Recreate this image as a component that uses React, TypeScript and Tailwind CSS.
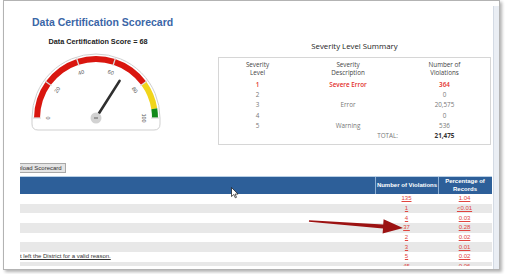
import React from "react";

const summaryRows = [
  { level: "1", desc: "Severe Error", count: "364", red: true },
  { level: "2", desc: "", count: "0" },
  { level: "3", desc: "Error", count: "20,575" },
  { level: "4", desc: "", count: "0" },
  { level: "5", desc: "Warning", count: "536" },
];

const detailRows = [
  { label: "", count: "135", pct: "1.04" },
  { label: "", count: "1", pct: "<0.01" },
  { label: "", count: "4", pct: "0.03" },
  { label: "", count: "37", pct: "0.28" },
  { label: "", count: "2", pct: "0.02" },
  { label: "", count: "3", pct: "0.01" },
  { label: "Student left the District for a valid reason.", count: "5", pct: "0.02" },
  { label: "", count: "45", pct: "0.06" },
];

// gauge centre in svg coords
const CX = 68;
const CY = 68;

const polar = (r: number, v: number) => {
  const a = ((180 - 1.8 * v) * Math.PI) / 180;
  return { x: CX + r * Math.cos(a), y: CY - r * Math.sin(a) };
};

const band = (v1: number, v2: number, ro = 62, ri = 56) => {
  const a = polar(ro, v1);
  const b = polar(ro, v2);
  const c = polar(ri, v2);
  const d = polar(ri, v1);
  return `M${a.x} ${a.y} A${ro} ${ro} 0 0 1 ${b.x} ${b.y} L${c.x} ${c.y} A${ri} ${ri} 0 0 0 ${d.x} ${d.y} Z`;
};

const Gauge = ({ value }: { value: number }) => {
  const tip = polar(44, value);
  const tail = polar(-3, value);
  return (
    <svg width="140" height="84" viewBox="0 0 140 84" className="mt-[4px] block">
      <path
        d="M4 68 A64 64 0 0 1 132 68 L132 74 Q132 80 126 80 L10 80 Q4 80 4 74 Z"
        fill="#fff"
        stroke="#cfcfcf"
        strokeWidth="1"
      />
      <path d={band(0, 80)} fill="#d9160f" />
      <path d={band(80, 95)} fill="#f1d51b" />
      <path d={band(95, 100)} fill="#128a1b" />
      {[0, 20, 40, 60, 80, 100].map((v) => {
        const a = polar(55, v);
        const b = polar(63, v);
        const l = polar(48, v);
        return (
          <g key={v}>
            <line x1={a.x} y1={a.y} x2={b.x} y2={b.y} stroke="#dcdcdc" strokeWidth="1.3" />
            <text
              x={l.x}
              y={l.y}
              fontSize="5.5"
              fill="#555"
              textAnchor="middle"
              dominantBaseline="central"
              fontFamily="'Liberation Sans', Arial, sans-serif"
              transform={`rotate(${1.8 * v - 90} ${l.x} ${l.y})`}
            >
              {v}
            </text>
          </g>
        );
      })}
      <line x1={tail.x} y1={tail.y} x2={tip.x} y2={tip.y} stroke="#2f2f2f" strokeWidth="2.6" strokeLinecap="round" />
      <circle cx={CX} cy={CY} r="5.5" fill="#d2d2d2" />
      <line x1={CX - 2} y1={CY} x2={CX + 2} y2={CY} stroke="#555" strokeWidth="0.9" />
    </svg>
  );
};

const SeveritySummary = () => (
  <div className="ml-[50px] mr-[2px] flex-1 pt-[40px] font-['Open_Sans',sans-serif]">
    <div className="text-center text-[7.8px] leading-[10px] text-[#222]">Severity Level Summary</div>
    <div className="mt-[6px] h-[88px] border border-[#d6d6d6] pt-[3px] text-[6.3px] text-[#777]">
      <div className="grid grid-cols-[77px_104px_89px] text-center leading-[8px] text-[#444]">
        <div>
          Severity
          <br />
          Level
        </div>
        <div>
          Severity
          <br />
          Description
        </div>
        <div>
          Number of
          <br />
          Violations
        </div>
      </div>
      <div className="mt-[3px]">
        {summaryRows.map((r) => (
          <div
            key={r.level}
            className={`grid h-[10.2px] grid-cols-[77px_104px_89px] items-center text-center leading-[10px] ${
              r.red ? "font-semibold text-[#e3302c]" : ""
            }`}
          >
            <div>{r.level}</div>
            <div>{r.desc}</div>
            <div>{r.count}</div>
          </div>
        ))}
        <div className="grid h-[10.2px] grid-cols-[77px_104px_89px] items-center leading-[10px]">
          <div />
          <div className="pr-[2px] text-right">TOTAL:</div>
          <div className="text-center font-bold text-[#333]">21,475</div>
        </div>
      </div>
    </div>
  </div>
);

const DetailTable = () => (
  <div className="mr-[1px] ml-[16px] mt-[3px] border-t border-[#b9d0e6] font-['Liberation_Sans',Arial,sans-serif]">
    <div className="grid h-[17px] grid-cols-[355px_63px_53px] bg-[#2d5f99] text-[6px] font-bold leading-[7.5px] text-white">
      <div />
      <div className="flex items-center justify-center border-l border-[#8eb0d4]">Number of Violations</div>
      <div className="flex items-center justify-center border-l border-[#8eb0d4] text-center">
        Percentage of
        <br />
        Records
      </div>
    </div>
    <div className="h-[72px] overflow-hidden">
      {detailRows.map((r, i) => (
        <div
          key={i}
          className={`grid h-[9.7px] grid-cols-[355px_63px_53px] items-center text-[6px] leading-[9px] ${
            i % 2 === 1 ? "bg-[#e8e8e8]" : "bg-white"
          }`}
        >
          <div className="overflow-hidden whitespace-nowrap">
            {r.label && <span className="ml-[-19px] text-[#333] underline">{r.label}</span>}
          </div>
          <div className="text-center text-[#e04640] underline">{r.count}</div>
          <div className="text-center text-[#e04640] underline">{r.pct}</div>
        </div>
      ))}
    </div>
  </div>
);

export default function App() {
  return (
    <div className="relative h-[274px] w-[507px] overflow-hidden bg-white">
      <div className="ml-[3px] flex h-[270px] w-[497px] overflow-hidden border border-[#b3b3b3] bg-white shadow-[2px_2px_3px_rgba(0,0,0,0.3)]">
        <div className="flex min-w-0 flex-1 flex-col">
          <div className="flex">
            <div className="ml-[24px] w-[140px] pt-[15px] font-['Liberation_Sans',Arial,sans-serif]">
              <div className="pl-[4px] text-[10.5px] font-bold leading-[12px] whitespace-nowrap text-[#3a66a7]">
                Data Certification Scorecard
              </div>
              <div className="mt-[9px] text-center text-[7.3px] font-bold leading-[9px] text-[#222]">
                Data Certification Score = 68
              </div>
              <Gauge value={68} />
            </div>
            <SeveritySummary />
          </div>
          <div className="ml-[16px] mt-[18px] flex h-[10px] items-start overflow-hidden">
            <div className="ml-[-18px] flex h-[10px] shrink-0 items-center whitespace-nowrap border border-[#a8a8a8] bg-[#e4e4e4] px-[3px] font-['Liberation_Sans',Arial,sans-serif] text-[6px] leading-[8px] text-[#333]">
              Download Scorecard
            </div>
          </div>
          <DetailTable />
        </div>
        <div className="mt-[5px] w-[6px] border-l border-[#d3dae4] bg-[#eaeef4]" />
      </div>

      {/* annotation arrow */}
      <svg className="absolute left-0 top-0" width="507" height="274" viewBox="0 0 507 274">
        <polygon
          points="309.1,220.3 383.2,224.4 383.6,219.3 403,228 382.6,233.6 383,228.4 308.9,221.7"
          fill="#9c1212"
        />
        {/* mouse cursor */}
        <path
          d="M231.5 187.5 L231.5 196.5 L233.8 194.5 L235.3 197.8 L236.5 197.3 L235.1 194.1 L238 194.1 Z"
          fill="#fff"
          stroke="#111"
          strokeWidth="0.7"
          strokeLinejoin="round"
        />
      </svg>
    </div>
  );
}
